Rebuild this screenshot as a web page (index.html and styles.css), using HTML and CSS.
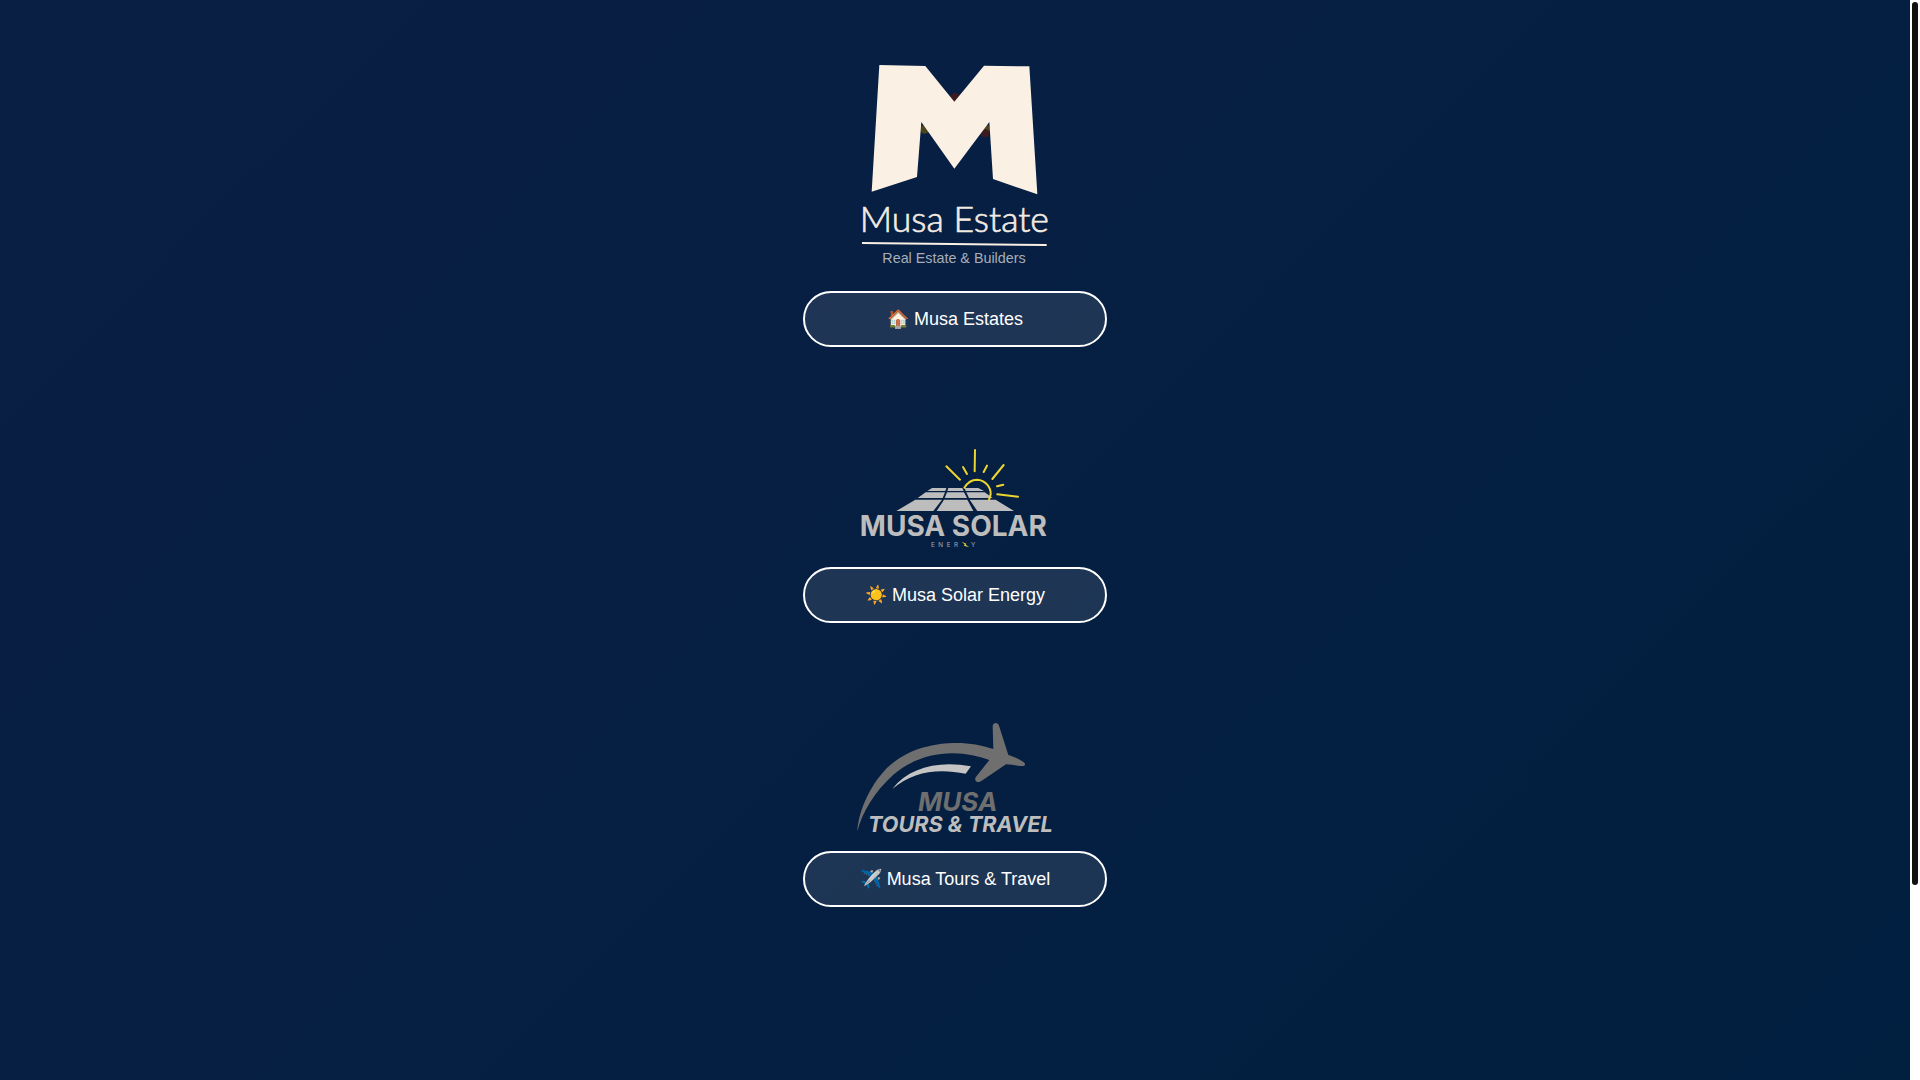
FILE: index.html
```html
<!DOCTYPE html>
<html lang="en">
<head>
    <meta charset="UTF-8">
    <meta name="viewport" content="width=device-width, initial-scale=1.0">
    <title>Musa Group</title>
    <link rel="stylesheet" href="styles.css">
    <script>
        let thumb; //custom scrollbar thumb

        //size and place the thumb from the real scroll position
        function moveThumb(){
            let total=document.documentElement.scrollHeight;
            thumb.style.height=(innerHeight/total*100)+"%";
            thumb.style.marginTop=(scrollY/total*innerHeight)+"px";
        }

        addEventListener("load", function(){
            thumb=document.getElementById("thumb");
            moveThumb();
            addEventListener("scroll", moveThumb);
            addEventListener("resize", moveThumb);
        });
    </script>
</head>
<body>
    <main class="container">
        <!-- Musa Estates -->
        <section class="company">
            <svg class="logo" viewBox="45 0 600 678" role="img" aria-label="Musa Estate">
                <circle class="dot-red" cx="345" cy="143" r="14"/>
                <circle class="dot-olive" cx="254" cy="238" r="13"/>
                <circle class="dot-olive" cx="436" cy="236" r="13"/>
                <circle class="dot-red" cx="435" cy="250" r="12"/>
                <path class="cream" d="M118 45L256 48L343 155L432 47L568 49L592 433L459 387L448 216L343 356L244 216L231 381L95 425Z"/>
                <text class="estate-name" x="343" y="545">Musa Estate</text>
                <path class="cream" d="M66 576L620 582L620 588L66 582Z"/>
                <text class="estate-sub" x="342" y="640">Real Estate &amp; Builders</text>
            </svg>
            <a href="#estates" class="btn">🏠 Musa Estates</a>
        </section>

        <!-- Musa Solar -->
        <section class="company">
            <svg class="logo" viewBox="45 0 600 336" role="img" aria-label="Musa Solar Energy">
                <g class="panel">
                    <path d="M276 144L319 144L316 153L262 153Z"/>
                    <path d="M325 144L367 144L371 153L322 153Z"/>
                    <path d="M374 144L415 144L432 153L377 153Z"/>
                    <path d="M257 157L315 157L308 174L233 174Z"/>
                    <path d="M321 157L372 157L381 174L314 174Z"/>
                    <path d="M379 157L434 157L458 174L387 174Z"/>
                    <path d="M226 179L306 179L280 213L169 213Z"/>
                    <path d="M312 179L382 179L400 213L290 213Z"/>
                    <path d="M389 179L467 179L522 213L412 213Z"/>
                </g>
                <g class="sun">
                    <path d="M373 143C384 125 398 119 411 119C437 120 453 143 452 162C451 169 449 174 447 179"/>
                    <path d="M405 30L404 94"/>
                    <path d="M319 79L360 119"/>
                    <path d="M369 81L381 102"/>
                    <path d="M441 77L431 96"/>
                    <path d="M491 75L457 117"/>
                    <path d="M471 139L490 134"/>
                    <path d="M472 163L534 170"/>
                </g>
                <text class="solar-name" x="340" y="289">MUSA SOLAR</text>
                <text class="solar-sub" x="273" y="320">E&#160; N&#160; E&#160; R</text>
                <path class="bolt" d="M364 305L379 311L377 314L388 322L372 317L374 313Z"/>
                <text class="solar-sub" x="393" y="320">Y</text>
            </svg>
            <a href="#solar" class="btn">☀️ Musa Solar Energy</a>
        </section>

        <!-- Musa Tours & Travel -->
        <section class="company">
            <svg class="logo" viewBox="45 18 600 360" role="img" aria-label="Musa Tours and Travel">
                <path class="plane" d="M52 364C55 310 85 232 140 175C200 117 280 99 350 99C390 99 425 106 460 117L458 49C459 37 474 36 477 47L505 135C525 141 548 152 555 161C557 168 549 169 540 168C526 166 512 164 498 163L424 213C414 221 401 213 407 202L448 150C415 138 380 131 340 130C280 129 215 148 160 194C105 244 67 305 52 364Z"/>
                <path class="swoosh" d="M157 237C207 173 292 151 393 169L377 191C291 174 218 185 157 237Z"/>
                <text class="travel-name" x="353" y="304">MUSA</text>
                <text class="travel-sub" x="361" y="365">TOURS &amp; TRAVEL</text>
            </svg>
            <a href="#travel" class="btn">✈️ Musa Tours &amp; Travel</a>
        </section>
    </main>
    <div class="rail" aria-hidden="true">
        <div class="thumb" id="thumb"></div>
    </div>
</body>
</html>
```
FILE: styles.css
```css
*{
    box-sizing: border-box;
}
html{
    background: white;
    scrollbar-width: none;
}
body{
    display: flex;
    align-items: flex-start;
    margin: 0;
    font-family: "Liberation Sans", Arial, sans-serif;
    color: white;
}
.container{
    flex: 1;
    display: flex;
    flex-direction: column;
    align-items: center;
    gap: 93px;
    padding: 50px 20px 408px;
    background: linear-gradient(135deg, #0a1f44, #001f3f);
}
.company{
    display: flex;
    flex-direction: column;
    align-items: center;
    gap: 15px;
}
.logo{
    display: block;
    width: 200px;
}
.btn{
    width: 304px;
    padding: 16px 30px;
    border: 2px solid white;
    border-radius: 30px;
    background: rgba(255, 255, 255, 0.1);
    color: white;
    font-size: 18px;
    line-height: 20px;
    text-align: center;
    text-decoration: none;
}
.btn:hover{
    background: rgba(255, 255, 255, 0.2);
}

/* scrollbar */
.rail{
    position: sticky;
    top: 0;
    width: 10px;
    height: 100vh;
    overflow: hidden;
    background: white;
}
.thumb{
    height: 82%;
    border: 2px solid white;
    border-radius: 10px;
    background: #111;
}

/* logos */
.logo text{
    text-anchor: middle;
}
.cream{
    fill: #faf0e4;
}
.dot-red{
    fill: #3d1a20;
}
.dot-olive{
    fill: #4b451f;
}
.estate-name{
    fill: #f3eae2;
    stroke: #f3eae2;
    stroke-width: 2;
    font-family: Lato, sans-serif;
    font-weight: 300;
    font-size: 107px;
}
.estate-sub{
    fill: #a9adb8;
    font-size: 43px;
}
.panel{
    fill: #bdbdbd;
}
.sun{
    fill: none;
    stroke: #ecd52f;
    stroke-width: 6;
    stroke-linecap: round;
}
.solar-name{
    fill: #bdbdbd;
    font-family: Inter, sans-serif;
    font-weight: 700;
    font-size: 84px;
}
.logo .solar-sub{
    fill: #a5acb6;
    font-family: Inter, sans-serif;
    font-size: 19px;
    text-anchor: start;
}
.bolt{
    fill: #ecd52f;
}
.plane{
    fill: #6f6f6f;
}
.swoosh{
    fill: #c4c4c4;
}
.travel-name,
.travel-sub{
    font-family: Inter, sans-serif;
    font-style: italic;
    font-weight: 700;
}
.travel-name{
    fill: #6f6f6f;
    font-size: 78px;
}
.travel-sub{
    fill: #bdbdbd;
    font-size: 65px;
}
```
